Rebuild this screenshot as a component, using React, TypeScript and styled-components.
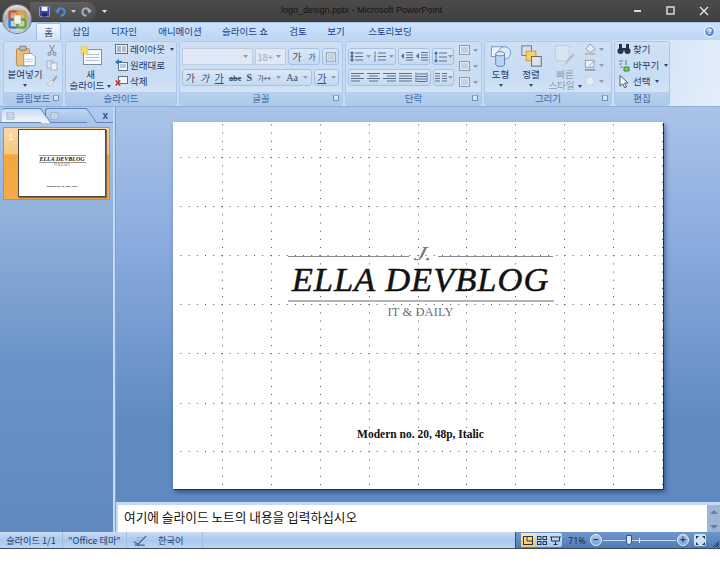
import React from 'react';
import styled, { createGlobalStyle } from 'styled-components';

const GlobalStyle = createGlobalStyle`
    html, body {
        margin: 0;
        padding: 0;
        background: #ffffff;
        font-family: "Noto Sans CJK KR", "Noto Sans", sans-serif;
    }
    * {
        box-sizing: border-box;
    }
`;

const Window = styled.div`
    position: relative;
    width: 720px;
    height: 549px;
    display: flex;
    flex-direction: column;
    overflow: hidden;
    border-bottom: 1px solid #3c4a5c;
`;

const TitleBar = styled.div`
    height: 22px;
    flex: none;
    display: flex;
    align-items: center;
    padding-left: 30px;
    background: linear-gradient(#4d4b49, #42403e);
    position: relative;
`;

const QuickAccess = styled.div`
    width: 66px;
    height: 19px;
    display: flex;
    align-items: center;
    gap: 5px;
    padding-left: 9px;
    border-radius: 0 10px 10px 0;
    background: linear-gradient(#5f5e5c, #4c4a48);
    margin-right: 6px;
`;

const TitleText = styled.div`
    position: absolute;
    left: 281px;
    top: 3px;
    font: 9px/15px "Liberation Sans", sans-serif;
    color: #121214;
    white-space: nowrap;
`;

const WindowControls = styled.div`
    position: absolute;
    right: 0;
    top: 0;
    display: flex;
`;

const WindowButton = styled.div`
    width: 33px;
    height: 21px;
    display: flex;
    align-items: center;
    justify-content: center;
`;

const OfficeButton = styled.div`
    position: absolute;
    left: 3px;
    top: 5px;
    width: 28px;
    height: 28px;
    border-radius: 50%;
    background: radial-gradient(circle at 50% 75%, #dfe7ee, #a3acb6 55%, #f4f4f2 90%);
    box-shadow: 0 0 0 1px #6c7178;
    display: flex;
    align-items: center;
    justify-content: center;
    z-index: 2;
`;

const TabsRow = styled.div`
    height: 18px;
    flex: none;
    display: flex;
    align-items: flex-end;
    padding-left: 36px;
    background: linear-gradient(#cfe2fa, #bdd6f5);
    border-top: 1px solid #9fc1ea;
    position: relative;
`;

const Tab = styled.div<{ $active?: boolean; $w: number }>`
    width: ${(p) => p.$w}px;
    height: 17px;
    text-align: center;
    font-size: 9.5px;
    line-height: 16px;
    color: #15428b;
    ${(p) =>
        p.$active &&
        `
        background: linear-gradient(#f2f7fd, #d0e1f5);
        border: 1px solid #9ebfe6;
        border-bottom: none;
        border-radius: 2px 2px 0 0;
        color: #1d3f73;
    `}
`;

const HelpBadge = styled.div`
    position: absolute;
    right: 5px;
    top: 3px;
    width: 11px;
    height: 11px;
    border-radius: 50%;
    background: radial-gradient(circle at 40% 30%, #9cc6f2, #2a62b8);
    border: 1px solid #ffffff;
    color: #ffffff;
    font: bold 8px/9px "Liberation Sans", sans-serif;
    text-align: center;
`;

const Ribbon = styled.div`
    height: 67px;
    flex: none;
    display: flex;
    gap: 2px;
    padding: 1px 0 0 3px;
    background: linear-gradient(100deg, #c4daf4 0%, #c6dbf4 80%, #e3eefa 100%);
    border-bottom: 1px solid #8db0da;
`;

const Group = styled.div<{ $w: number }>`
    width: ${(p) => p.$w}px;
    display: flex;
    flex-direction: column;
    border: 1px solid #aec8e7;
    border-radius: 3px;
    overflow: hidden;
`;

const GroupBody = styled.div`
    flex: 1;
    position: relative;
    display: flex;
    background: linear-gradient(#cfe0f5, #c8dcf3 70%, #d3e3f6);
    min-height: 0;
`;

const GroupCaption = styled.div`
    height: 13px;
    flex: none;
    position: relative;
    text-align: center;
    font-size: 9.5px;
    line-height: 13px;
    color: #3d6aa5;
    background: linear-gradient(#b7d0ee, #adc9ea);
`;

const Launcher = styled.span`
    position: absolute;
    right: 3px;
    top: 3px;
    width: 6px;
    height: 6px;
    border: 1px solid #6f90bb;
    border-top-color: #8fabcf;
    background: #d6e4f5;
`;

const BigButton = styled.div<{ $w: number; $muted?: boolean }>`
    width: ${(p) => p.$w}px;
    display: flex;
    flex-direction: column;
    align-items: center;
    padding-top: 3px;
    font-size: 9.5px;
    line-height: 11px;
    text-align: center;
    color: ${(p) => (p.$muted ? '#8a9cb3' : '#1f3a66')};
    flex: none;
`;

const BigLabel = styled.div`
    margin-top: 2px;
    white-space: pre;
`;

const Arrow = styled.span`
    display: inline-block;
    width: 0;
    height: 0;
    margin-left: 3px;
    vertical-align: middle;
    border-left: 2.5px solid transparent;
    border-right: 2.5px solid transparent;
    border-top: 3px solid #2d4a75;
`;

const ArrowBelow = styled(Arrow)`
    margin-left: 0;
    margin-top: 4px;
`;

const SmallColumn = styled.div<{ $gap?: number; $pad?: number; $left?: number }>`
    display: flex;
    flex-direction: column;
    gap: ${(p) => p.$gap ?? 2}px;
    padding-top: ${(p) => p.$pad ?? 0}px;
    padding-left: ${(p) => p.$left ?? 0}px;
    flex: none;
`;

const SmallRow = styled.div`
    height: 14px;
    display: flex;
    align-items: center;
    gap: 2px;
    font-size: 9.5px;
    line-height: 14px;
    color: #1f3a66;
    white-space: nowrap;
`;

const StackedControls = styled.div`
    display: flex;
    flex-direction: column;
    gap: 4px;
    padding: 6px 0 0 2px;
`;

const ControlRow = styled.div`
    display: flex;
    gap: 2px;
`;

const Field = styled.div<{ $w: number }>`
    width: ${(p) => p.$w}px;
    height: 17px;
    display: flex;
    align-items: center;
    justify-content: flex-end;
    gap: 3px;
    padding-right: 4px;
    background: #dfe8f3;
    border: 1px solid #bccde2;
    font-size: 9.5px;
    color: #9eadc0;
`;

const ButtonGroup = styled.div<{ $w: number }>`
    width: ${(p) => p.$w}px;
    height: 17px;
    display: flex;
    align-items: center;
    justify-content: space-around;
    background: linear-gradient(#dbe8f7, #c5d9f1);
    border: 1px solid #a6c1e2;
    border-radius: 3px;
    font-size: 10px;
    color: #3c4f6b;
    white-space: nowrap;
`;

const Main = styled.div`
    flex: 1;
    min-height: 0;
    display: flex;
    background: linear-gradient(#aac4e8, #8dade0 30%, #5e8ac1 75%, #5e8ac1);
`;

const SidePanel = styled.div`
    width: 113px;
    flex: none;
    display: flex;
    flex-direction: column;
    padding-top: 2px;
    background: linear-gradient(#b0c9ec, #8cadd8 30%, #6a94c8 60%, #5f8ac1);
`;

const PanelTabs = styled.div`
    height: 14px;
    display: flex;
    align-items: flex-end;
    padding-left: 2px;
    border-bottom: 1px solid #5a86bc;
    position: relative;
`;

const PanelTab = styled.div<{ $active?: boolean }>`
    position: relative;
    width: ${(p) => (p.$active ? 39 : 42)}px;
    height: 14px;
    margin-right: 4px;
    display: flex;
    align-items: center;
    padding-left: 4px;
    border-radius: 3px 0 0 0;
    background: ${(p) => (p.$active ? 'linear-gradient(#c8dbf4, #f2f7fd)' : 'linear-gradient(#bed3ef, #a8c3e6)')};
    border: 1px solid #5a86bc;
    border-width: 1px 0 0 ${(p) => (p.$active ? 0 : 1)}px;
    z-index: ${(p) => (p.$active ? 1 : 0)};
    &::after {
        content: '';
        position: absolute;
        right: -5px;
        top: -1px;
        width: 9px;
        height: 14px;
        background: inherit;
        border-right: 1px solid #5a86bc;
        border-top: 1px solid #5a86bc;
        transform: skewX(36deg);
    }
    & > svg {
        position: relative;
        z-index: 1;
    }
`;

const PanelClose = styled.div`
    position: absolute;
    right: 5px;
    top: 0;
    font: bold 10px/13px "Liberation Sans", sans-serif;
    color: #2f5487;
`;

const ThumbRow = styled.div`
    margin: 4px 3px 0;
    height: 73px;
    display: flex;
    padding: 1px 3px 2px 0;
    border: 1px solid #d68a34;
    background: linear-gradient(#fbd9a4 0%, #f8c77f 36%, #f4a63f 38%, #f5ab47 100%);
`;

const ThumbIndex = styled.div`
    width: 14px;
    padding-top: 2px;
    text-align: center;
    font: 9px/12px "Liberation Sans", sans-serif;
    color: #ffffff;
`;

const Thumb = styled.div`
    flex: 1;
    display: flex;
    flex-direction: column;
    align-items: center;
    background: #ffffff;
    border: 1px solid #4d4a46;
    box-shadow: 1px 1px 1px #7c6a50;
    padding-top: 25px;
    font-family: "Liberation Serif", serif;
`;

const ThumbTitle = styled.div`
    width: 47px;
    height: 8px;
    font: italic bold 6px/6px "Liberation Serif", serif;
    text-align: center;
    white-space: nowrap;
    color: #111111;
    border-top: 1px solid #9a9a9a;
    border-bottom: 1px solid #9a9a9a;
`;

const ThumbSub = styled.div`
    margin-top: 1px;
    font-size: 3px;
    line-height: 3px;
    color: #555555;
`;

const ThumbFoot = styled.div`
    margin-top: 18px;
    font-size: 2.8px;
    line-height: 4px;
    font-weight: bold;
    color: #111111;
`;

const Splitter = styled.div`
    width: 3px;
    flex: none;
    background: #c4d9f3;
    border-right: 1px solid #7fa1cf;
`;

const Workspace = styled.div`
    flex: 1;
    min-width: 0;
    display: flex;
    flex-direction: column;
`;

const SlideArea = styled.div`
    height: 395px;
    flex: none;
    padding: 15px 0 0 57px;
`;

const Slide = styled.div`
    position: relative;
    width: 490px;
    height: 367px;
    background: #ffffff;
    box-shadow: 1px 1px 0 #1d3557, 2px 3px 5px rgba(20, 40, 80, 0.6);
    display: flex;
    flex-direction: column;
    align-items: center;
    padding: 122px 0 0 5px;
    font-family: "Liberation Serif", serif;
`;

const GuideLayer = styled.svg`
    position: absolute;
    left: 0;
    top: 0;
`;

const Flourish = styled.div`
    width: 266px;
    height: 19px;
    display: flex;
    align-items: center;
    justify-content: space-between;
`;

const FlourishRule = styled.span<{ $w: number }>`
    width: ${(p) => p.$w}px;
    height: 1px;
    margin-top: 6px;
    background: #8a8a8a;
`;

const FlourishMark = styled.span`
    font: italic 20px/19px "Liberation Serif", serif;
    color: #777777;
    transform: skewX(-14deg) scaleX(1.3);
`;

const LogoTitle = styled.div`
    height: 35px;
    font: italic 400 34.5px/33px "Liberation Serif", serif;
    letter-spacing: 1px;
    color: #111111;
    -webkit-text-stroke: 0.5px #111111;
    white-space: nowrap;
`;

const LogoRule = styled.div`
    width: 266px;
    height: 2px;
    margin-top: 2px;
    background: #b4b4b4;
`;

const LogoSub = styled.div`
    margin-top: 3px;
    font-size: 12.5px;
    line-height: 15px;
    letter-spacing: 0.1px;
    color: #6f6e72;
`;

const FootNote = styled.div`
    margin-top: 106px;
    font-size: 11.5px;
    line-height: 16px;
    font-weight: bold;
    color: #111111;
`;

const Notes = styled.div`
    flex: 1;
    display: flex;
    border-top: 3px solid #c5d9f3;
`;

const NotesText = styled.div`
    flex: 1;
    background: #ffffff;
    border-left: 2px solid #c5d9f3;
    padding: 3px 0 0 6px;
    font-size: 12.7px;
    line-height: 18px;
    color: #111111;
`;

const NotesScroll = styled.div`
    width: 13px;
    flex: none;
    display: flex;
    flex-direction: column;
    justify-content: space-between;
    align-items: center;
    padding: 5px 0 3px;
    background: #9db5d6;
`;

const ScrollArrow = styled.span<{ $down?: boolean }>`
    width: 0;
    height: 0;
    border-left: 4px solid transparent;
    border-right: 4px solid transparent;
    ${(p) => (p.$down ? 'border-top: 4px solid #6c7f99;' : 'border-bottom: 4px solid #6c7f99;')}
`;

const StatusBar = styled.div`
    height: 16px;
    flex: none;
    display: flex;
    align-items: stretch;
    font-size: 9.2px;
    line-height: 15px;
    color: #1f3f73;
    background: linear-gradient(#c9ddf6, #a9c7ee 55%, #bcd5f3);
`;

const StatusCell = styled.div<{ $w: number; $left?: number }>`
    width: ${(p) => p.$w}px;
    flex: none;
    display: flex;
    align-items: center;
    justify-content: ${(p) => (p.$left === undefined ? 'center' : 'flex-start')};
    padding-left: ${(p) => p.$left ?? 0}px;
    gap: 10px;
    border-right: 1px solid #9fbbdf;
    white-space: nowrap;
`;

const StatusFill = styled.div`
    flex: 1;
`;

const StatusRight = styled.div`
    width: 205px;
    flex: none;
    display: flex;
    align-items: center;
    padding-left: 5px;
    background: linear-gradient(#6f97cb, #4f7cb6);
    border-left: 1px solid #2f4f7c;
    position: relative;
`;

const ViewButtons = styled.div`
    width: 41px;
    height: 14px;
    display: flex;
    background: linear-gradient(#cfe0f6, #a9c6ec);
    border-radius: 2px;
`;

const ViewButton = styled.div<{ $active?: boolean }>`
    flex: 1;
    display: flex;
    align-items: center;
    justify-content: center;
    background: ${(p) => (p.$active ? 'linear-gradient(#fde9a9, #f9c45a)' : 'transparent')};
`;

const ZoomValue = styled.div`
    width: 22px;
    margin-left: 6px;
    font: 9px/15px "Noto Sans", sans-serif;
    color: #10305f;
    white-space: nowrap;
`;

const ZoomRound = styled.div`
    width: 12px;
    height: 12px;
    flex: none;
    border-radius: 50%;
    border: 1px solid #e5eefa;
    background: linear-gradient(#a9c6ec, #7ba2d5);
    color: #1c3c6c;
    font: bold 10px/9px "Liberation Sans", sans-serif;
    text-align: center;
`;

const ZoomTrack = styled.div`
    width: 73px;
    height: 1px;
    margin: 0 1px;
    background: #c8dbf3;
    position: relative;
`;

const ZoomTick = styled.span`
    position: absolute;
    left: 36px;
    top: -2px;
    width: 1px;
    height: 5px;
    background: #e5eefa;
`;

const ZoomThumb = styled.span`
    position: absolute;
    left: 23px;
    top: -5px;
    width: 6px;
    height: 10px;
    background: #dce8f7;
    border: 1px solid #2f5487;
    border-radius: 1px 1px 3px 3px;
`;

const FitButton = styled.div`
    width: 12px;
    height: 12px;
    margin-left: 5px;
    background: #cfe0f6;
    border-radius: 2px;
    display: flex;
    align-items: center;
    justify-content: center;
`;

const Grip = styled.div`
    position: absolute;
    right: 1px;
    bottom: 1px;
    width: 7px;
    height: 7px;
    background: repeating-linear-gradient(135deg, transparent 0 1px, #1f3f6c 1px 2px);
    clip-path: polygon(100% 0, 100% 100%, 0 100%);
`;

const OfficeLogo = () => (
    <svg width="19" height="19" viewBox="0 0 19 19">
        <rect x="1.5" y="1.5" width="8" height="8" rx="1.5" fill="none" stroke="#d8502a" strokeWidth="2.4" />
        <rect x="9.5" y="1.5" width="8" height="8" rx="1.5" fill="none" stroke="#e89a2c" strokeWidth="2.4" />
        <rect x="1.5" y="9.5" width="8" height="8" rx="1.5" fill="none" stroke="#3d7fc4" strokeWidth="2.4" />
        <rect x="9.5" y="9.5" width="8" height="8" rx="1.5" fill="none" stroke="#6aa63a" strokeWidth="2.4" />
        <rect x="6" y="5" width="7" height="9" fill="#f4f0e2" stroke="#c79a58" strokeWidth="0.6" />
    </svg>
);

const SaveIcon = () => (
    <svg width="11" height="11" viewBox="0 0 11 11">
        <rect x="0.5" y="0.5" width="10" height="10" rx="1" fill="#3c46a8" stroke="#c3c7e6" strokeWidth="0.6" />
        <rect x="2.5" y="1" width="6" height="4" fill="#eef0fa" />
        <rect x="3" y="7" width="5" height="3.5" fill="#20266a" />
    </svg>
);

const UndoIcon = ({ color, flip }: { color: string; flip?: boolean }) => (
    <svg width="11" height="11" viewBox="0 0 11 11" style={flip ? { transform: 'scaleX(-1)' } : undefined}>
        <path d="M2.5 5.5 A3.6 3.6 0 1 1 5.5 9.5" fill="none" stroke={color} strokeWidth="2" />
        <path d="M0 4 L5 3.4 L2.8 8 Z" fill={color} />
    </svg>
);

const TinyArrow = ({ color = '#c9cfd8' }: { color?: string }) => (
    <svg width="5" height="5" viewBox="0 0 5 5">
        <path d="M0 1 H5 L2.5 4 Z" fill={color} />
    </svg>
);

const PasteIcon = () => (
    <svg width="22" height="22" viewBox="0 0 27 26">
        <rect x="3" y="4" width="16" height="21" rx="1.5" fill="#e9bf74" stroke="#a9823f" />
        <rect x="7" y="1" width="8" height="5" rx="1" fill="#b8bdc4" stroke="#6a6f78" />
        <path d="M12 10 H22 L26 14 V25 H12 Z" fill="#fbfcfe" stroke="#7b8ba3" />
        <path d="M14 17 H23 M14 20 H23" stroke="#a9b7ca" />
    </svg>
);

const CutIcon = () => (
    <svg width="12" height="12" viewBox="0 0 12 12" fill="none" stroke="#8b98aa" strokeWidth="1.2">
        <path d="M3.5 1 L7.5 8 M8.5 1 L4.5 8" />
        <circle cx="3.5" cy="9.8" r="1.5" />
        <circle cx="8.5" cy="9.8" r="1.5" />
    </svg>
);

const CopyIcon = () => (
    <svg width="12" height="11" viewBox="0 0 12 11">
        <rect x="1" y="1" width="6" height="7" fill="#dde6f1" stroke="#a3b1c4" />
        <rect x="5" y="3" width="6" height="7" fill="#eef3f9" stroke="#a3b1c4" />
    </svg>
);

const BrushIcon = () => (
    <svg width="12" height="12" viewBox="0 0 12 12">
        <path d="M11 1 L6.5 6.5" stroke="#9aa6b8" strokeWidth="2" />
        <path d="M6 5 L8 7.5 L4 11.5 L1 9.5 Z" fill="#e6e8ea" stroke="#a8b2bf" strokeWidth="0.7" />
    </svg>
);

const NewSlideIcon = () => (
    <svg width="22" height="22" viewBox="0 0 22 22">
        <rect x="3.5" y="4.5" width="18" height="15" fill="#f6f8fb" stroke="#7c8ca3" />
        <path d="M6 9.5 H19 M6 12.5 H19 M6 15.5 H19" stroke="#b5c0cf" />
        <path d="M4.5 0 L5.6 2.6 L8.4 1.2 L7 3.9 L9.5 5 L7 6.1 L8.4 8.8 L5.6 7.4 L4.5 10 L3.4 7.4 L0.6 8.8 L2 6.1 L-0.5 5 L2 3.9 L0.6 1.2 L3.4 2.6 Z" fill="#f5de5e" stroke="#e2b93a" strokeWidth="0.4" />
    </svg>
);

const LayoutIcon = () => (
    <svg width="13" height="12" viewBox="0 0 13 12">
        <rect x="0.5" y="1.5" width="12" height="9" fill="#eef2f7" stroke="#5f7089" />
        <rect x="2" y="3" width="4" height="6" fill="#a9b8cb" />
        <path d="M7 4 H11 M7 6 H11 M7 8 H11" stroke="#7b8ba3" />
    </svg>
);

const ResetIcon = () => (
    <svg width="13" height="12" viewBox="0 0 13 12">
        <rect x="3.5" y="3.5" width="9" height="8" fill="#f2f5f9" stroke="#5f7089" />
        <path d="M5 6 H11 M5 8 H11" stroke="#8c9bb0" />
        <path d="M0 3 L4 0 V2 H7 V4 H4 V6 Z" fill="#2e6fbe" />
    </svg>
);

const DeleteIcon = () => (
    <svg width="13" height="12" viewBox="0 0 13 12">
        <rect x="3.5" y="1.5" width="9" height="7" fill="#f2f5f9" stroke="#5f7089" />
        <path d="M0.8 5.5 L5.2 10.5 M5.2 5.5 L0.8 10.5" stroke="#d92c20" strokeWidth="1.7" />
    </svg>
);

const ListIcon = ({ numbered }: { numbered?: boolean }) => (
    <svg width="13" height="11" viewBox="0 0 13 11">
        <path d="M5 2 H13 M5 5.5 H13 M5 9 H13" stroke="#5f7089" />
        <path d={numbered ? 'M2 0.5 V3.5 M2 4 V7 M2 7.5 V10.5' : 'M1 1 H3 V3 H1 Z M1 4.5 H3 V6.5 H1 Z M1 8 H3 V10 H1 Z'} stroke="#5a6d8a" fill="#5a6d8a" />
    </svg>
);

const IndentIcon = () => (
    <svg width="13" height="11" viewBox="0 0 13 11">
        <path d="M6 1.5 H13 M6 4 H13 M6 6.5 H13 M6 9 H13" stroke="#5f7089" />
        <path d="M4 2 L1 5 L4 8 Z" fill="#5a6d8a" />
    </svg>
);

const LineSpacingIcon = () => (
    <svg width="13" height="12" viewBox="0 0 13 12">
        <path d="M5 2 H13 M5 6 H13 M5 10 H13" stroke="#5f7089" />
        <path d="M2 0 L4 3 H0 Z M2 12 L4 9 H0 Z" fill="#3f6aa5" />
        <path d="M2 3 V9" stroke="#3f6aa5" />
    </svg>
);

const AlignIcon = ({ kind }: { kind: 'left' | 'center' | 'right' | 'full' | 'dist' }) => {
    const paths = {
        left: 'M0 1.5 H13 M0 4 H9 M0 6.5 H13 M0 9 H9',
        center: 'M0 1.5 H13 M2 4 H11 M0 6.5 H13 M2 9 H11',
        right: 'M0 1.5 H13 M4 4 H13 M0 6.5 H13 M4 9 H13',
        full: 'M0 1.5 H13 M0 4 H13 M0 6.5 H13 M0 9 H13',
        dist: 'M1 0.5 V10 M12 0.5 V10 M2 2 H11 M2 4.5 H11 M2 7 H11 M2 9.5 H11',
    };
    return (
        <svg width="13" height="11" viewBox="0 0 13 11">
            <path d={paths[kind]} stroke="#5f7089" />
        </svg>
    );
};

const ColumnsIcon = () => (
    <svg width="12" height="11" viewBox="0 0 12 11">
        <path d="M0 1.5 H5 M7 1.5 H12 M0 4 H5 M7 4 H12 M0 6.5 H5 M7 6.5 H12 M0 9 H5 M7 9 H12" stroke="#5f7089" />
    </svg>
);

const MuteBox = ({ w = 13 }: { w?: number }) => (
    <svg width={w} height="12" viewBox="0 0 13 12">
        <rect x="1.5" y="1.5" width="10" height="9" fill="#e4ebf5" stroke="#8b9bb2" />
        <path d="M3 4 H10 M3 6 H10 M3 8 H10" stroke="#aab7c8" />
    </svg>
);

const ShapesIcon = () => (
    <svg width="22" height="22" viewBox="0 0 24 25">
        <rect x="1" y="2" width="13" height="11" fill="#eef4fb" stroke="#6d8fbd" />
        <circle cx="16" cy="9" r="7" fill="#dbe8f7" stroke="#6d8fbd" />
        <path d="M6 10 V22 A5 2.3 0 0 0 16 22 V10 Z" fill="#b8d5f4" stroke="#4e7cb5" />
        <ellipse cx="11" cy="10" rx="5" ry="2.3" fill="#e3f0fc" stroke="#4e7cb5" />
    </svg>
);

const ArrangeIcon = () => (
    <svg width="23" height="22" viewBox="0 0 24 25">
        <rect x="1" y="1" width="11" height="11" fill="#d9dde3" stroke="#666d78" />
        <rect x="6" y="7" width="11" height="11" fill="#f7d463" stroke="#c49a2e" />
        <rect x="12" y="13" width="11" height="11" fill="#dfe3e8" stroke="#555c68" />
    </svg>
);

const QuickStyleIcon = () => (
    <svg width="22" height="22" viewBox="0 0 30 32">
        <rect x="1" y="1" width="20" height="22" rx="4" fill="#d9e4f2" stroke="#b3c3d8" />
        <path d="M28 13 L17 25" stroke="#b0bac8" strokeWidth="3" />
        <path d="M17 23 L20 26 L12 31 Z" fill="#c4ccd7" />
    </svg>
);

const FillIcon = () => (
    <svg width="13" height="13" viewBox="0 0 15 13">
        <path d="M7 0 L13 6 L7 10 L2 6 Z" fill="#e9edf3" stroke="#8a97aa" />
        <rect x="1" y="10.5" width="12" height="2" fill="#c6b48a" />
    </svg>
);

const OutlineIcon = () => (
    <svg width="13" height="13" viewBox="0 0 15 13">
        <rect x="1.5" y="0.5" width="10" height="8" fill="#edf1f7" stroke="#8a97aa" />
        <path d="M12 1 L6 7" stroke="#8a97aa" />
        <rect x="1" y="10.5" width="12" height="2" fill="#8d98a8" />
    </svg>
);

const EffectIcon = () => (
    <svg width="13" height="12" viewBox="0 0 15 12">
        <circle cx="7" cy="6" r="5" fill="#e6ecf4" stroke="#c2cddc" />
    </svg>
);

const FindIcon = () => (
    <svg width="14" height="12" viewBox="0 0 14 12" fill="#26344c">
        <circle cx="3.5" cy="8" r="3" />
        <circle cx="10.5" cy="8" r="3" />
        <rect x="2" y="1" width="3" height="6" />
        <rect x="9" y="1" width="3" height="6" />
        <rect x="5" y="5" width="4" height="2.5" />
    </svg>
);

const ReplaceIcon = () => (
    <svg width="14" height="13" viewBox="0 0 14 13">
        <path d="M2 2 H6 M2 5 H5 M3 8 H6" stroke="#6f7d90" />
        <path d="M9 1 V6 M7 8 H12 V12 H7 Z" stroke="#3d8a3a" fill="#84c46c" />
    </svg>
);

const SelectIcon = () => (
    <svg width="14" height="13" viewBox="0 0 14 13">
        <path d="M3 0.5 L11 8 H7.5 L9.5 12 L7.5 12.5 L5.8 8.7 L3 11 Z" fill="#ffffff" stroke="#3a465c" strokeWidth="0.9" />
    </svg>
);

const SpellIcon = () => (
    <svg width="15" height="13" viewBox="0 0 18 13">
        <path d="M1 8 L6 11 L16 1 M2 12 H14" fill="none" stroke="#3c5f92" strokeWidth="1.4" />
        <path d="M4 3 H12 M3 6 H9" stroke="#8ea7c8" />
    </svg>
);

const verticalGuides = [49, 98, 147, 196, 245, 293, 342, 391, 440, 489];
const horizontalGuides = [35, 84, 133, 182, 231, 281, 329];

const SlideGuides = () => (
    <GuideLayer width="490" height="367">
        {verticalGuides.map((x) => (
            <line key={x} x1={x + 0.5} y1="2.5" x2={x + 0.5} y2="366" stroke="#555" strokeDasharray="1 7.17" />
        ))}
        {horizontalGuides.map((y) => (
            <line key={y} x1="7.5" y1={y + 0.5} x2="484" y2={y + 0.5} stroke="#555" strokeDasharray="1 7.17" />
        ))}
    </GuideLayer>
);

const App = (): React.ReactElement => {
    return (
        <>
            <GlobalStyle />
            <Window>
                <TitleBar>
                    <QuickAccess>
                        <SaveIcon />
                        <UndoIcon color="#4a8fe0" />
                        <TinyArrow />
                        <UndoIcon color="#9fb2cc" flip />
                    </QuickAccess>
                    <TinyArrow color="#e4e6ea" />
                    <TitleText>logo_design.pptx - Microsoft PowerPoint</TitleText>
                    <WindowControls>
                        <WindowButton>
                            <svg width="9" height="9" viewBox="0 0 9 9">
                                <path d="M1 5 H8" stroke="#d8d8d8" strokeWidth="2" />
                            </svg>
                        </WindowButton>
                        <WindowButton>
                            <svg width="9" height="9" viewBox="0 0 9 9">
                                <rect x="1" y="1" width="7" height="7" fill="none" stroke="#e4e4e4" strokeWidth="1.4" />
                            </svg>
                        </WindowButton>
                        <WindowButton>
                            <svg width="10" height="10" viewBox="0 0 10 10">
                                <path d="M1 1 L9 9 M9 1 L1 9" stroke="#e4e4e4" strokeWidth="1.4" />
                            </svg>
                        </WindowButton>
                    </WindowControls>
                </TitleBar>
                <OfficeButton>
                    <OfficeLogo />
                </OfficeButton>
                <TabsRow>
                    <Tab $active $w={25}>홈</Tab>
                    <Tab $w={40}>삽입</Tab>
                    <Tab $w={46}>디자인</Tab>
                    <Tab $w={66}>애니메이션</Tab>
                    <Tab $w={64}>슬라이드 쇼</Tab>
                    <Tab $w={42}>검토</Tab>
                    <Tab $w={34}>보기</Tab>
                    <Tab $w={74}>스토리보딩</Tab>
                    <HelpBadge>?</HelpBadge>
                </TabsRow>
                <Ribbon>
                    <Group $w={60}>
                        <GroupBody>
                            <BigButton $w={42}>
                                <PasteIcon />
                                <BigLabel>붙여넣기</BigLabel>
                                <ArrowBelow />
                            </BigButton>
                            <SmallColumn $gap={4} $pad={2}>
                                <CutIcon />
                                <CopyIcon />
                                <BrushIcon />
                            </SmallColumn>
                        </GroupBody>
                        <GroupCaption>
                            클립보드
                            <Launcher />
                        </GroupCaption>
                    </Group>
                    <Group $w={112}>
                        <GroupBody>
                            <BigButton $w={49}>
                                <NewSlideIcon />
                                <BigLabel>
                                    {'새\n슬라이드'}
                                    <Arrow />
                                </BigLabel>
                            </BigButton>
                            <SmallColumn>
                                <SmallRow>
                                    <LayoutIcon />
                                    레이아웃
                                    <Arrow />
                                </SmallRow>
                                <SmallRow>
                                    <ResetIcon />
                                    원래대로
                                </SmallRow>
                                <SmallRow>
                                    <DeleteIcon />
                                    삭제
                                </SmallRow>
                            </SmallColumn>
                        </GroupBody>
                        <GroupCaption>슬라이드</GroupCaption>
                    </Group>
                    <Group $w={164}>
                        <GroupBody>
                            <StackedControls>
                                <ControlRow>
                                    <Field $w={71}>
                                        <TinyArrow color="#8b9bb0" />
                                    </Field>
                                    <Field $w={31}>
                                        18+
                                        <TinyArrow color="#8b9bb0" />
                                    </Field>
                                    <ButtonGroup $w={32}>
                                        <span>가</span>
                                        <span style={{ fontSize: 8 }}>가</span>
                                    </ButtonGroup>
                                    <ButtonGroup $w={17}>
                                        <MuteBox w={12} />
                                    </ButtonGroup>
                                </ControlRow>
                                <ControlRow>
                                    <ButtonGroup $w={130}>
                                        <span>가</span>
                                        <span style={{ fontStyle: 'italic' }}>가</span>
                                        <span style={{ textDecoration: 'underline' }}>가</span>
                                        <span style={{ fontSize: 7, fontWeight: 700, textDecoration: 'line-through' }}>abc</span>
                                        <span style={{ fontWeight: 700, fontFamily: 'Liberation Serif, serif' }}>S</span>
                                        <span style={{ fontSize: 7 }}>가↔</span>
                                        <TinyArrow color="#8b9bb0" />
                                        <span style={{ fontFamily: 'Liberation Serif, serif' }}>Aa</span>
                                        <TinyArrow color="#8b9bb0" />
                                    </ButtonGroup>
                                    <ButtonGroup $w={25}>
                                        <span style={{ textDecoration: 'underline' }}>가</span>
                                        <TinyArrow color="#8b9bb0" />
                                    </ButtonGroup>
                                </ControlRow>
                            </StackedControls>
                        </GroupBody>
                        <GroupCaption>
                            글꼴
                            <Launcher />
                        </GroupCaption>
                    </Group>
                    <Group $w={137}>
                        <GroupBody>
                            <StackedControls>
                                <ControlRow>
                                    <ButtonGroup $w={48}>
                                        <ListIcon />
                                        <TinyArrow color="#8b9bb0" />
                                        <ListIcon numbered />
                                        <TinyArrow color="#8b9bb0" />
                                    </ButtonGroup>
                                    <ButtonGroup $w={32}>
                                        <IndentIcon />
                                        <IndentIcon />
                                    </ButtonGroup>
                                    <ButtonGroup $w={22}>
                                        <LineSpacingIcon />
                                        <TinyArrow color="#8b9bb0" />
                                    </ButtonGroup>
                                </ControlRow>
                                <ControlRow>
                                    <ButtonGroup $w={83}>
                                        <AlignIcon kind="left" />
                                        <AlignIcon kind="center" />
                                        <AlignIcon kind="right" />
                                        <AlignIcon kind="full" />
                                        <AlignIcon kind="dist" />
                                    </ButtonGroup>
                                    <ButtonGroup $w={21}>
                                        <ColumnsIcon />
                                        <TinyArrow color="#8b9bb0" />
                                    </ButtonGroup>
                                </ControlRow>
                            </StackedControls>
                            <SmallColumn $left={4} $pad={1}>
                                <SmallRow>
                                    <MuteBox />
                                    <TinyArrow color="#8b9bb0" />
                                </SmallRow>
                                <SmallRow>
                                    <MuteBox />
                                    <TinyArrow color="#8b9bb0" />
                                </SmallRow>
                                <SmallRow>
                                    <MuteBox />
                                    <TinyArrow color="#8b9bb0" />
                                </SmallRow>
                            </SmallColumn>
                        </GroupBody>
                        <GroupCaption>
                            단락
                            <Launcher />
                        </GroupCaption>
                    </Group>
                    <Group $w={128}>
                        <GroupBody>
                            <BigButton $w={31}>
                                <ShapesIcon />
                                <BigLabel>도형</BigLabel>
                                <ArrowBelow />
                            </BigButton>
                            <BigButton $w={30}>
                                <ArrangeIcon />
                                <BigLabel>정렬</BigLabel>
                                <ArrowBelow />
                            </BigButton>
                            <BigButton $w={38} $muted>
                                <QuickStyleIcon />
                                <BigLabel>
                                    {'빠른\n스타일'}
                                    <Arrow />
                                </BigLabel>
                            </BigButton>
                            <SmallColumn>
                                <SmallRow>
                                    <FillIcon />
                                    <TinyArrow color="#8b9bb0" />
                                </SmallRow>
                                <SmallRow>
                                    <OutlineIcon />
                                    <TinyArrow color="#8b9bb0" />
                                </SmallRow>
                                <SmallRow>
                                    <EffectIcon />
                                    <TinyArrow color="#8b9bb0" />
                                </SmallRow>
                            </SmallColumn>
                        </GroupBody>
                        <GroupCaption>
                            그리기
                            <Launcher />
                        </GroupCaption>
                    </Group>
                    <Group $w={56}>
                        <GroupBody>
                            <SmallColumn $left={2}>
                                <SmallRow>
                                    <FindIcon />
                                    찾기
                                </SmallRow>
                                <SmallRow>
                                    <ReplaceIcon />
                                    바꾸기
                                    <Arrow />
                                </SmallRow>
                                <SmallRow>
                                    <SelectIcon />
                                    선택
                                    <Arrow />
                                </SmallRow>
                            </SmallColumn>
                        </GroupBody>
                        <GroupCaption>편집</GroupCaption>
                    </Group>
                </Ribbon>
                <Main>
                    <SidePanel>
                        <PanelTabs>
                            <PanelTab $active>
                                <MuteBox w={9} />
                            </PanelTab>
                            <PanelTab>
                                <MuteBox w={9} />
                            </PanelTab>
                            <PanelClose>x</PanelClose>
                        </PanelTabs>
                        <ThumbRow>
                            <ThumbIndex>1</ThumbIndex>
                            <Thumb>
                                <ThumbTitle>ELLA DEVBLOG</ThumbTitle>
                                <ThumbSub>IT &amp; DAILY</ThumbSub>
                                <ThumbFoot>Modern no. 20, 48p, Italic</ThumbFoot>
                            </Thumb>
                        </ThumbRow>
                    </SidePanel>
                    <Splitter />
                    <Workspace>
                        <SlideArea>
                            <Slide>
                                <SlideGuides />
                                <Flourish>
                                    <FlourishRule $w={121} />
                                    <FlourishMark>J.</FlourishMark>
                                    <FlourishRule $w={115} />
                                </Flourish>
                                <LogoTitle>ELLA DEVBLOG</LogoTitle>
                                <LogoRule />
                                <LogoSub>IT &amp; DAILY</LogoSub>
                                <FootNote>Modern no. 20, 48p, Italic</FootNote>
                            </Slide>
                        </SlideArea>
                        <Notes>
                            <NotesText>여기에 슬라이드 노트의 내용을 입력하십시오</NotesText>
                            <NotesScroll>
                                <ScrollArrow />
                                <ScrollArrow $down />
                            </NotesScroll>
                        </Notes>
                    </Workspace>
                </Main>
                <StatusBar>
                    <StatusCell $w={63}>슬라이드 1/1</StatusCell>
                    <StatusCell $w={64}>"Office 테마"</StatusCell>
                    <StatusCell $w={76} $left={6}>
                        <SpellIcon />
                        한국어
                    </StatusCell>
                    <StatusFill />
                    <StatusRight>
                        <ViewButtons>
                            <ViewButton $active>
                                <svg width="10" height="9" viewBox="0 0 10 9">
                                    <rect x="0.5" y="0.5" width="9" height="8" fill="none" stroke="#1d3557" />
                                    <path d="M4 1 V5 H9" fill="none" stroke="#1d3557" />
                                </svg>
                            </ViewButton>
                            <ViewButton>
                                <svg width="10" height="9" viewBox="0 0 10 9" fill="none" stroke="#1d3557">
                                    <rect x="0.5" y="0.5" width="3.5" height="3" />
                                    <rect x="6" y="0.5" width="3.5" height="3" />
                                    <rect x="0.5" y="5.5" width="3.5" height="3" />
                                    <rect x="6" y="5.5" width="3.5" height="3" />
                                </svg>
                            </ViewButton>
                            <ViewButton>
                                <svg width="11" height="9" viewBox="0 0 11 9" fill="none" stroke="#1d3557">
                                    <path d="M0 1 H11 M1.5 1 V5 H9.5 V1 M5.5 5 V8 M3.5 8.5 H7.5" />
                                </svg>
                            </ViewButton>
                        </ViewButtons>
                        <ZoomValue>71%</ZoomValue>
                        <ZoomRound>−</ZoomRound>
                        <ZoomTrack>
                            <ZoomTick />
                            <ZoomThumb />
                        </ZoomTrack>
                        <ZoomRound>+</ZoomRound>
                        <FitButton>
                            <svg width="9" height="9" viewBox="0 0 9 9">
                                <path d="M0 0 L3 0 L0 3 Z M9 0 L6 0 L9 3 Z M0 9 L3 9 L0 6 Z M9 9 L6 9 L9 6 Z" fill="#1d3557" />
                            </svg>
                        </FitButton>
                        <Grip />
                    </StatusRight>
                </StatusBar>
            </Window>
        </>
    );
};

export default App;
